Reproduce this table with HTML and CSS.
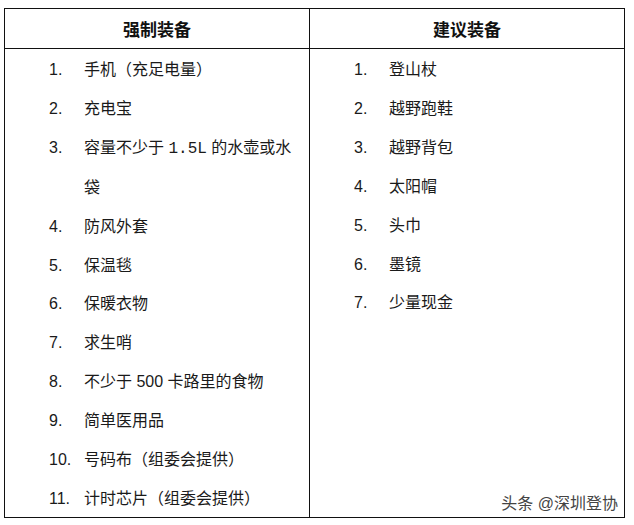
FILE: index.html
```html
<!DOCTYPE html>
<html lang="zh-CN">
<head>
<meta charset="utf-8">
<link rel="stylesheet" href="styles.css">
</head>
<body>
<div class="page">
  <div class="table">
    <div class="head">强制装备</div>
    <div class="head">建议装备</div>
    <div class="cell">
      <ol class="list">
        <li><span class="num">1.</span><span class="txt">手机（充足电量）</span></li>
        <li><span class="num">2.</span><span class="txt">充电宝</span></li>
        <li><span class="num">3.</span><span class="txt">容量不少于 <span class="mono">1.5L</span> 的水壶或水<br>袋</span></li>
        <li><span class="num">4.</span><span class="txt">防风外套</span></li>
        <li><span class="num">5.</span><span class="txt">保温毯</span></li>
        <li><span class="num">6.</span><span class="txt">保暖衣物</span></li>
        <li><span class="num">7.</span><span class="txt">求生哨</span></li>
        <li><span class="num">8.</span><span class="txt">不少于 500 卡路里的食物</span></li>
        <li><span class="num">9.</span><span class="txt">简单医用品</span></li>
        <li><span class="num">10.</span><span class="txt">号码布（组委会提供）</span></li>
        <li><span class="num">11.</span><span class="txt">计时芯片（组委会提供）</span></li>
      </ol>
    </div>
    <div class="cell">
      <ol class="list">
        <li><span class="num">1.</span><span class="txt">登山杖</span></li>
        <li><span class="num">2.</span><span class="txt">越野跑鞋</span></li>
        <li><span class="num">3.</span><span class="txt">越野背包</span></li>
        <li><span class="num">4.</span><span class="txt">太阳帽</span></li>
        <li><span class="num">5.</span><span class="txt">头巾</span></li>
        <li><span class="num">6.</span><span class="txt">墨镜</span></li>
        <li><span class="num">7.</span><span class="txt">少量现金</span></li>
      </ol>
    </div>
    <div class="watermark">头条 @深圳登协</div>
  </div>
</div>
</body>
</html>
```
FILE: styles.css
```css
html, body {
  margin: 0;
  padding: 0;
  background: #fff;
}
body {
  font-family: "Liberation Sans", "Noto Sans CJK SC", sans-serif;
  color: #1a1a1a;
}
.page {
  padding: 8px 8px 0 4px;
}
.table {
  position: relative;
  display: grid;
  grid-template-columns: 305px 314px;
  width: 621px;
  border: 1px solid #111;
  box-sizing: border-box;
}
.head {
  height: 39px;
  display: flex;
  align-items: center;
  justify-content: center;
  font-size: 17px;
  font-weight: bold;
  border-bottom: 1px solid #111;
  color: #111;
}
.head:first-child,
.cell:nth-child(3) {
  border-right: 1px solid #111;
}
.cell {
  padding: 2px 0 0 44px;
  height: 466px;
}
.list {
  list-style: none;
  margin: 0;
  padding: 0;
}
.list li {
  display: flex;
  font-size: 16px;
  line-height: 38.9px;
}
.num {
  width: 35px;
  flex: none;
}
.txt {
  flex: none;
}
.mono {
  font-family: "Liberation Mono", monospace;
  font-size: 16px;
}
.watermark {
  position: absolute;
  right: 6px;
  bottom: 3px;
  font-size: 16px;
  line-height: 20px;
  color: #444;
  text-shadow: 0 0 2px #fff, 0 0 2px #fff;
}
```
